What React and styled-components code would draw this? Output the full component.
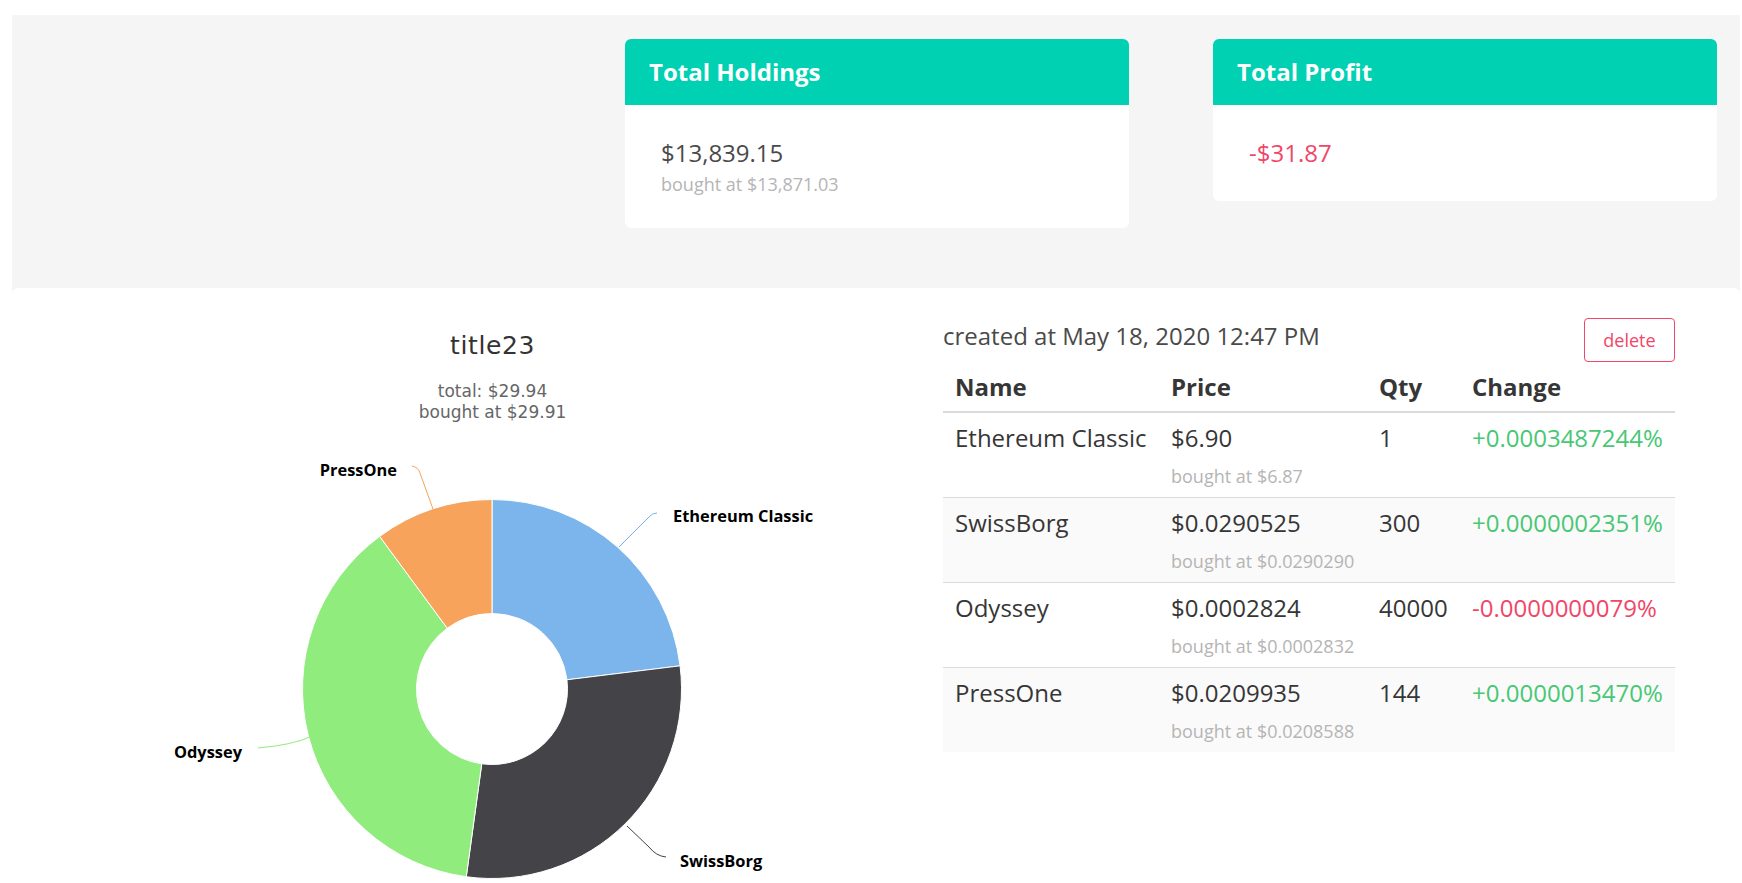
import React from "react";
import styled, { createGlobalStyle } from "styled-components";

const coins = [
  { name: "Ethereum Classic", price: "$6.90", bought: "$6.87", qty: 1, value: 6.9, change: "+0.0003487244%", up: true, color: "#7cb5ec" },
  { name: "SwissBorg", price: "$0.0290525", bought: "$0.0290290", qty: 300, value: 0.0290525 * 300, change: "+0.0000002351%", up: true, color: "#434348" },
  { name: "Odyssey", price: "$0.0002824", bought: "$0.0002832", qty: 40000, value: 0.0002824 * 40000, change: "-0.0000000079%", up: false, color: "#90ed7d" },
  { name: "PressOne", price: "$0.0209935", bought: "$0.0208588", qty: 144, value: 0.0209935 * 144, change: "+0.0000013470%", up: true, color: "#f7a35c" },
];

// label spots + connector curves, in svg coords
const labels = {
  "Ethereum Classic": { x: 631, y: 99, anchor: "start", line: "M 615 90 Q 610 90 607 94 L 577 124" },
  SwissBorg: { x: 638, y: 444, anchor: "start", line: "M 585 403 L 607 424 Q 614 433 624 434" },
  Odyssey: { x: 200, y: 335, anchor: "end", line: "M 216 325 Q 250 322 268 314" },
  PressOne: { x: 355, y: 53, anchor: "end", line: "M 370 43 Q 376 44 378 50 L 391 86" },
};

const CX = 450;
const CY = 266;
const R = 189.5;
const r = 75.5;

const point = (rad, deg) => {
  const a = (deg * Math.PI) / 180;
  return `${(CX + rad * Math.sin(a)).toFixed(2)} ${(CY - rad * Math.cos(a)).toFixed(2)}`;
};

const slicePath = (a0, a1) => {
  const large = a1 - a0 > 180 ? 1 : 0;
  return [
    `M ${point(R, a0)}`,
    `A ${R} ${R} 0 ${large} 1 ${point(R, a1)}`,
    `L ${point(r, a1)}`,
    `A ${r} ${r} 0 ${large} 0 ${point(r, a0)}`,
    "Z",
  ].join(" ");
};

const Donut = () => {
  const total = coins.reduce((s, c) => s + c.value, 0);
  let start = 0;
  const slices = coins.map((c) => {
    const sweep = (c.value / total) * 360;
    const s = { ...c, a0: start, a1: start + sweep };
    start += sweep;
    return s;
  });

  return (
    <ChartSvg width="901" height="470" viewBox="0 0 901 470">
      {slices.map((s) => (
        <path key={s.name} d={slicePath(s.a0, s.a1)} fill={s.color} stroke="#ffffff" strokeWidth="1" />
      ))}
      {slices.map((s) => (
        <g key={s.name + "-label"}>
          <path d={labels[s.name].line} fill="none" stroke={s.color} strokeWidth="1" />
          <LabelText x={labels[s.name].x} y={labels[s.name].y} textAnchor={labels[s.name].anchor}>
            {s.name}
          </LabelText>
        </g>
      ))}
    </ChartSvg>
  );
};

const App = () => {
  return (
    <Page>
      <GlobalStyle />
      <Shell>
        <Stats>
          <Card>
            <CardHeader>Total Holdings</CardHeader>
            <CardBody>
              <Amount>$13,839.15</Amount>
              <Sub>bought at $13,871.03</Sub>
            </CardBody>
          </Card>
          <Card>
            <CardHeader>Total Profit</CardHeader>
            <CardBody>
              <Amount $loss>-$31.87</Amount>
            </CardBody>
          </Card>
        </Stats>

        <Panel>
          <ChartCol>
            <ChartTitle>title23</ChartTitle>
            <ChartSub>
              total: $29.94
              <br />
              bought at $29.91
            </ChartSub>
            <Donut />
          </ChartCol>

          <TableCol>
            <TopRow>
              <Created>created at May 18, 2020 12:47 PM</Created>
              <DeleteButton>delete</DeleteButton>
            </TopRow>
            <Table>
              <colgroup>
                <col style={{ width: 216 }} />
                <col style={{ width: 208 }} />
                <col style={{ width: 93 }} />
                <col style={{ width: 215 }} />
              </colgroup>
              <thead>
                <tr>
                  <Th>Name</Th>
                  <Th>Price</Th>
                  <Th>Qty</Th>
                  <Th>Change</Th>
                </tr>
              </thead>
              <tbody>
                {coins.map((c, i) => (
                  <Row key={c.name} $striped={i % 2 === 1}>
                    <Td>{c.name}</Td>
                    <Td>
                      {c.price}
                      <Bought>bought at {c.bought}</Bought>
                    </Td>
                    <Td>{c.qty}</Td>
                    <Td $tone={c.up ? "up" : "down"}>{c.change}</Td>
                  </Row>
                ))}
              </tbody>
            </Table>
          </TableCol>
        </Panel>
      </Shell>
    </Page>
  );
};

// Style
const GlobalStyle = createGlobalStyle`
  body {
    margin: 0;
    background: #ffffff;
    font-family: "Open Sans", "Liberation Sans", sans-serif;
  }
`;

const Page = styled.div`
  padding: 15px 2px 0 12px;
`;

const Shell = styled.div`
  background: #f5f5f5;
`;

const Stats = styled.div`
  display: flex;
  justify-content: flex-end;
  align-items: flex-start;
  gap: 84px;
  padding: 24px 23px 60px 0;
`;

const Card = styled.div`
  width: 504px;
  background: #ffffff;
  border-radius: 6px;
  overflow: hidden;
`;

const CardHeader = styled.div`
  background: #00d1b2;
  color: #ffffff;
  font-weight: 700;
  font-size: 24px;
  line-height: 36px;
  padding: 15px 24px;
`;

const CardBody = styled.div`
  padding: 30px 36px;
`;

const Amount = styled.div`
  font-size: 24px;
  line-height: 36px;
  color: ${(p) => (p.$loss ? "#f14668" : "#4a4a4a")};
`;

const Sub = styled.div`
  font-size: 18px;
  line-height: 27px;
  color: #b5b5b5;
`;

const Panel = styled.div`
  display: flex;
  min-height: 620px;
  padding-left: 30px;
  background: #ffffff;
  border-radius: 6px 6px 0 0;
`;

const ChartCol = styled.div`
  width: 901px;
  padding-top: 43px;
  text-align: center;
`;

const ChartTitle = styled.div`
  font-family: "DejaVu Sans", sans-serif;
  font-size: 25px;
  line-height: 30px;
  letter-spacing: 0.6px;
  color: #333333;
`;

const ChartSub = styled.div`
  margin-top: 20px;
  font-family: "DejaVu Sans", sans-serif;
  font-size: 17px;
  line-height: 21px;
  color: #666666;
`;

const ChartSvg = styled.svg`
  display: block;
`;

const LabelText = styled.text`
  font-family: "Open Sans", "Liberation Sans", sans-serif;
  font-weight: 700;
  font-size: 16.4px;
  fill: #000000;
`;

const TableCol = styled.div`
  width: 732px;
  padding-top: 30px;
`;

const TopRow = styled.div`
  display: flex;
  justify-content: space-between;
  align-items: flex-start;
`;

const Created = styled.div`
  font-size: 24px;
  line-height: 36px;
  color: #4a4a4a;
`;

const DeleteButton = styled.button`
  width: 91px;
  height: 44px;
  padding: 0;
  border: 1px solid #f14668;
  border-radius: 4px;
  background: #ffffff;
  color: #f14668;
  font-family: "Open Sans", sans-serif;
  font-size: 18px;
  cursor: pointer;
`;

const Table = styled.table`
  width: 732px;
  border-collapse: collapse;
  table-layout: fixed;
  color: #363636;

  tbody tr:last-child td {
    border-bottom: 0;
  }
`;

const Th = styled.th`
  text-align: left;
  font-weight: 700;
  font-size: 24px;
  line-height: 36px;
  padding: 7px 12px 6px;
  border-bottom: 2px solid #dbdbdb;
  white-space: nowrap;
`;

const Row = styled.tr`
  background: ${(p) => (p.$striped ? "#fafafa" : "transparent")};
`;

const Td = styled.td`
  vertical-align: top;
  font-size: 24px;
  line-height: 36px;
  padding: 7px 12px 7px;
  border-bottom: 1px solid #dbdbdb;
  white-space: nowrap;
  color: ${(p) => (p.$tone === "up" ? "#48c774" : p.$tone === "down" ? "#f14668" : "#363636")};
`;

const Bought = styled.span`
  display: block;
  margin-top: 7px;
  font-size: 18px;
  line-height: 27px;
  color: #b5b5b5;
`;

export default App;
